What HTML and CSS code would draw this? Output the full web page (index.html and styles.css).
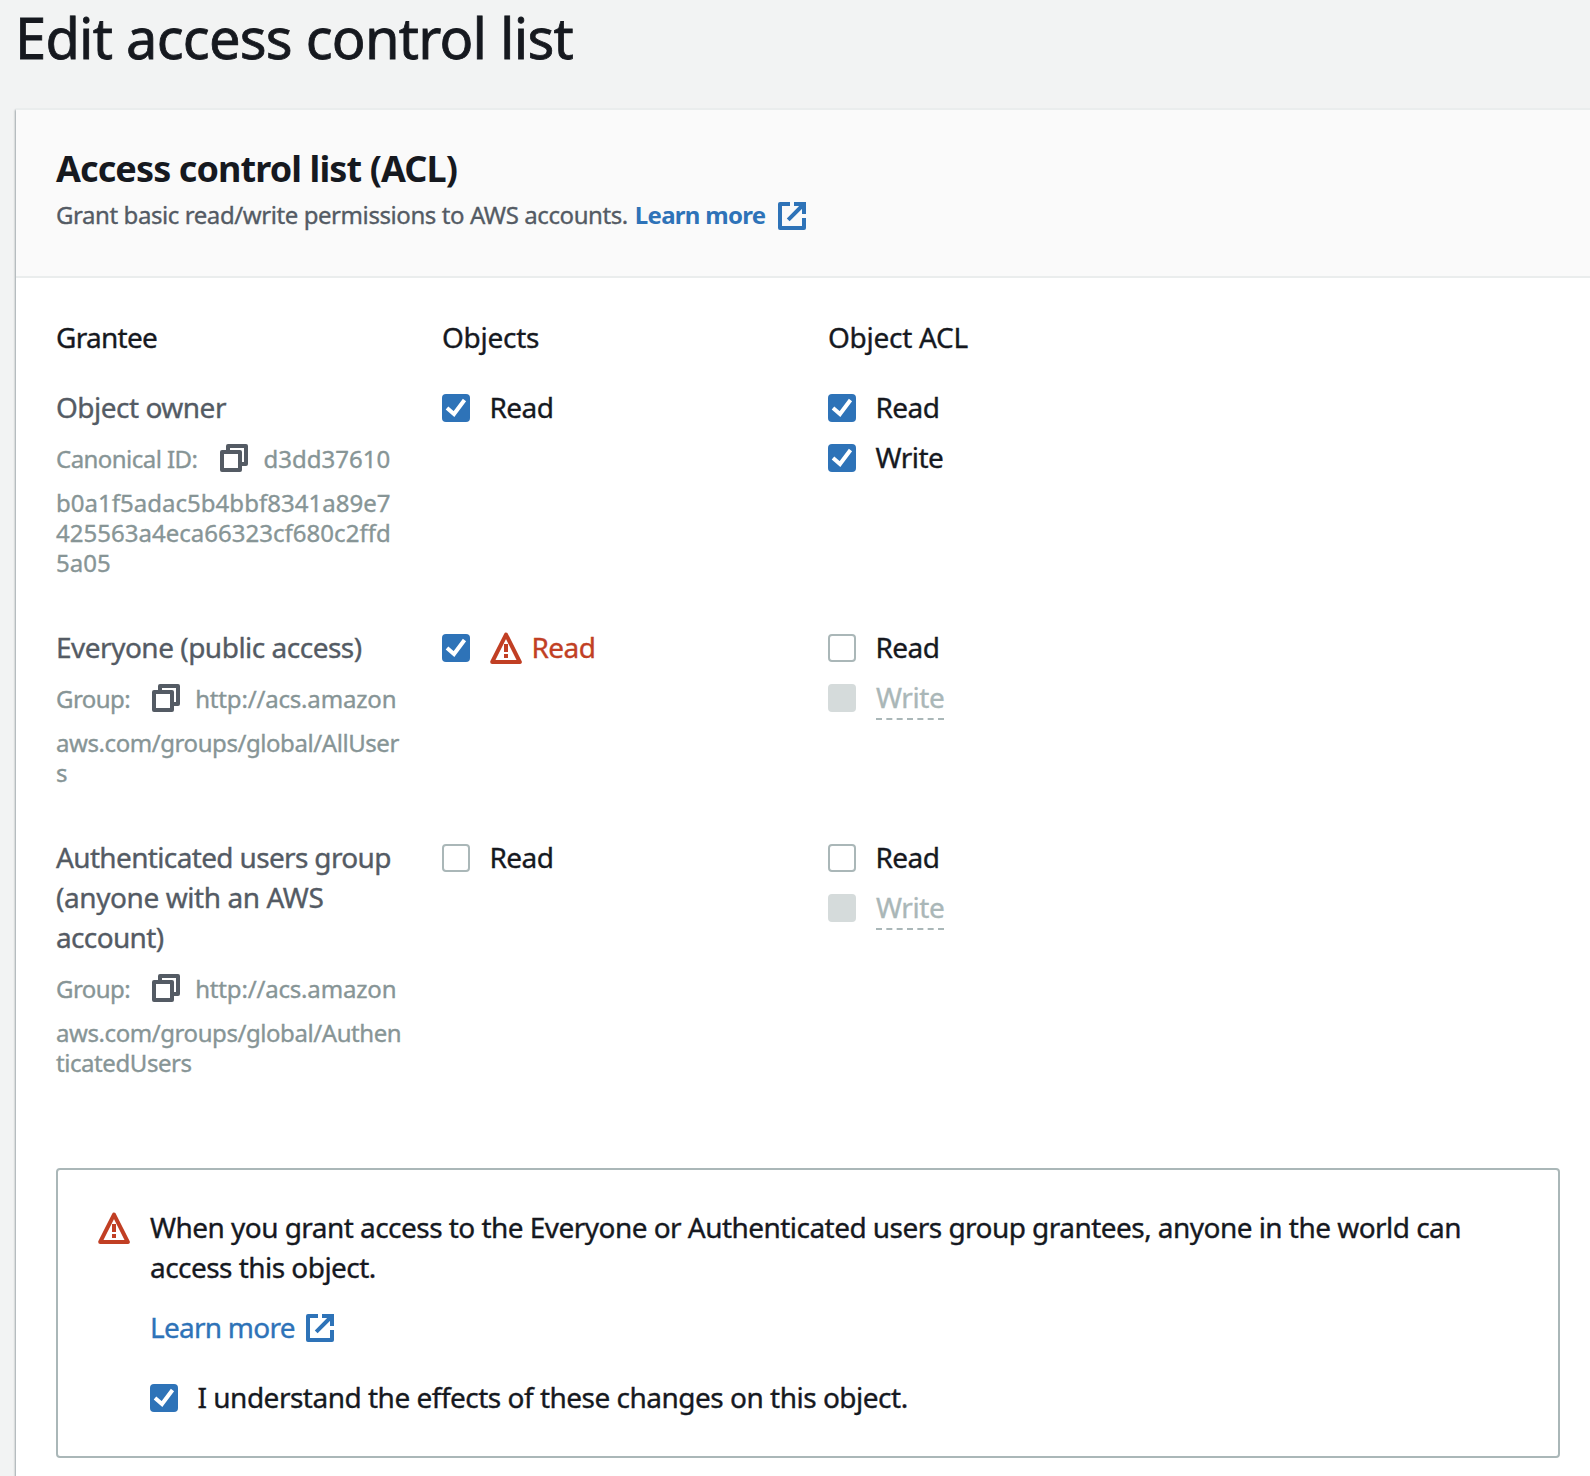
FILE: index.html
```html
<!DOCTYPE html>
<html lang="en">
<head>
<meta charset="utf-8">
<title>Edit access control list</title>
<link rel="stylesheet" href="styles.css">
</head>
<body>
<svg class="sprite" aria-hidden="true">
  <symbol id="external" viewBox="0 0 28 28"><path d="M12 2H2V26H26V16" fill="none" stroke="currentColor" stroke-width="4" stroke-linejoin="round"/><path d="M16 2H26V12M10.2 17.8L25 3" fill="none" stroke="currentColor" stroke-width="4"/></symbol>
  <symbol id="copy" viewBox="0 0 28 28"><path d="M8 7V2H26V20H21M2 8H20V26H2Z" fill="none" stroke="currentColor" stroke-width="4" stroke-linejoin="round"/></symbol>
  <symbol id="warning" viewBox="0 0 32 32"><path d="M16 2.6L29.8 30H2.2Z" fill="none" stroke="currentColor" stroke-width="4" stroke-linejoin="round"/><path d="M16 12V20M16 22V26" fill="none" stroke="currentColor" stroke-width="4"/></symbol>
  <symbol id="check" viewBox="0 0 28 28"><path d="M5 14L12 20L22.5 6" fill="none" stroke="currentColor" stroke-width="4"/></symbol>
</svg>

<h1 class="page-title">Edit access control list</h1>

<main class="card">
  <header class="card-header">
    <h2 class="card-title">Access control list (ACL)</h2>
    <p class="card-desc"><span>Grant basic read/write permissions to AWS accounts.</span><a class="link link-bold">Learn more</a><svg class="icon icon-link"><use href="#external"/></svg></p>
  </header>

  <div class="card-body">
    <section class="acl">
      <div class="col-head">Grantee</div>
      <div class="col-head head-objects">Objects</div>
      <div class="col-head head-objects">Object ACL</div>

      <div class="grantee">
        <div class="name">Object owner</div>
        <div class="id-line"><span>Canonical ID:</span><svg class="icon"><use href="#copy"/></svg><span class="hash hash-start">d3dd37610</span></div>
        <div class="id-rest hash">b0a1f5adac5b4bbf8341a89e7<br>425563a4eca66323cf680c2ffd<br>5a05</div>
      </div>
      <div class="options">
        <label class="option"><span class="box checked"><svg><use href="#check"/></svg></span><span>Read</span></label>
      </div>
      <div class="options">
        <label class="option"><span class="box checked"><svg><use href="#check"/></svg></span><span>Read</span></label>
        <label class="option"><span class="box checked"><svg><use href="#check"/></svg></span><span>Write</span></label>
      </div>

      <div class="grantee">
        <div class="name">Everyone (public access)</div>
        <div class="id-line"><span>Group:</span><svg class="icon"><use href="#copy"/></svg><span class="url">http://acs.amazon</span></div>
        <div class="id-rest">aws.com/groups/global/AllUser<br>s</div>
      </div>
      <div class="options">
        <label class="option risky"><span class="box checked"><svg><use href="#check"/></svg></span><svg class="warn"><use href="#warning"/></svg><span>Read</span></label>
      </div>
      <div class="options">
        <label class="option"><span class="box"></span><span>Read</span></label>
        <label class="option disabled"><span class="box"></span><span class="hint">Write</span></label>
      </div>

      <div class="grantee">
        <div class="name name-long">Authenticated users group<br><span class="name-note">(anyone with an AWS</span><br>account)</div>
        <div class="id-line"><span>Group:</span><svg class="icon"><use href="#copy"/></svg><span class="url">http://acs.amazon</span></div>
        <div class="id-rest">aws.com/groups/global/Authen<br>ticatedUsers</div>
      </div>
      <div class="options">
        <label class="option"><span class="box"></span><span>Read</span></label>
      </div>
      <div class="options">
        <label class="option"><span class="box"></span><span>Read</span></label>
        <label class="option disabled"><span class="box"></span><span class="hint">Write</span></label>
      </div>
    </section>

    <section class="alert">
      <svg class="warn"><use href="#warning"/></svg>
      <div class="alert-content">
        <p>When you grant access to the Everyone or Authenticated users group grantees, anyone in the world can access this object.</p>
        <p class="alert-link"><a class="link">Learn more</a><svg class="icon icon-link"><use href="#external"/></svg></p>
        <label class="option confirm"><span class="box checked"><svg><use href="#check"/></svg></span><span>I understand the effects of these changes on this object.</span></label>
      </div>
    </section>
  </div>
</main>
</body>
</html>
```
FILE: styles.css
```css
* { box-sizing: border-box; }

html, body { height: 100%; }

body {
  margin: 0;
  background: #f2f3f3;
  color: #16191f;
  font: 28px/40px "Noto Sans", sans-serif;
  letter-spacing: -0.54px;
  -webkit-text-stroke: 0.35px currentColor;
  display: flex;
  flex-direction: column;
  overflow: hidden;
}

h1, h2, p { margin: 0; }
svg { display: block; flex: none; }
.sprite { position: absolute; width: 0; height: 0; }

.page-title {
  padding: 1px 0 0 15px;
  margin-bottom: 35px;
  font-size: 56px;
  line-height: 72px;
  font-weight: 400;
  letter-spacing: -0.76px;
  -webkit-text-stroke-width: 0.8px;
}

.card {
  flex: 1 0 auto;
  margin-left: 16px;
  background: #fff;
  border-top: 2px solid #eaeded;
  box-shadow: 0 2px 2px rgba(0, 28, 36, .3), -1px 2px 2px rgba(0, 28, 36, .25);
}

.card-header {
  height: 168px;
  padding: 37px 40px 0;
  background: #fafafa;
  border-bottom: 2px solid #eaeded;
}
.card-title {
  font-size: 36px;
  line-height: 44px;
  letter-spacing: -0.9px;
  -webkit-text-stroke-width: 0;
}
.card-desc {
  display: flex;
  margin-top: 8px;
  font-size: 24px;
  line-height: 32px;
  letter-spacing: -0.42px;
  color: #545b64;
}
.link { color: #2e73b8; }
.link-bold {
  margin-left: 7px;
  font-weight: 700;
  letter-spacing: -0.7px;
  -webkit-text-stroke-width: 0;
}
.icon { width: 28px; height: 28px; }
.icon-link { color: #2e73b8; margin: 3px 0 0 13px; }

.card-body { padding: 39px 30px 0 40px; }

.acl {
  display: grid;
  grid-template-columns: 386px 386px 1fr;
  grid-template-rows: 70px 240px 210px 331px;
}
.col-head { letter-spacing: -0.72px; }
.head-objects { letter-spacing: -0.27px; }

.name { color: #545b64; letter-spacing: -0.5px; }
.name-long { letter-spacing: -0.65px; }
.name-note { letter-spacing: -0.42px; }
.id-line {
  display: flex;
  margin-top: 12px;
  font-size: 24px;
  color: #879596;
}
.id-line .icon { margin: 5px 15px 0 22px; color: #545b64; }
.id-rest {
  margin-top: 9px;
  font-size: 24px;
  line-height: 30px;
  letter-spacing: -0.43px;
  color: #879596;
}
.hash { letter-spacing: 0.02px; }
.hash-start { margin-left: 1px; }
.url { letter-spacing: -0.18px; }

.options { display: flex; flex-direction: column; gap: 10px; }
.option { display: flex; gap: 19.5px; letter-spacing: -0.55px; }
.box {
  flex: none;
  width: 28px;
  height: 28px;
  margin-top: 7px;
  border: 2px solid #aab7b8;
  border-radius: 4px;
  background: #fff;
}
.box.checked { border: 0; background: #2e73b8; color: #fff; }
.box svg { width: 28px; height: 28px; }
.warn { width: 32px; height: 32px; margin-top: 5px; color: #c13f24; }

.risky { gap: 0; color: #c13f24; }
.risky .warn { margin: 5px 9.5px 0 20px; }
.disabled { gap: 20px; color: #aab7b8; letter-spacing: -0.4px; }
.disabled .box { border: 0; background: #d5dbdb; }
.hint { padding-bottom: 1px; border-bottom: 2px dashed #aab7b8; }

.alert {
  display: flex;
  gap: 20px;
  height: 290px;
  padding: 37px 40px 0;
  border: 2px solid #aab7b8;
  border-radius: 4px;
}
.alert-link { display: flex; margin-top: 20px; }
.alert-link .link { letter-spacing: -0.75px; }
.alert-link .icon-link { margin: 7px 0 0 11px; }
.confirm { margin-top: 30px; letter-spacing: -0.5px; }
```
